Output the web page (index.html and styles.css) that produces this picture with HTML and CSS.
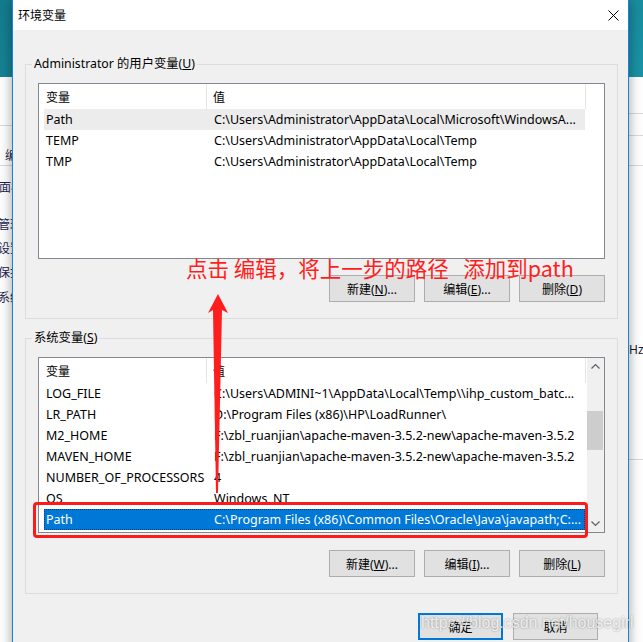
FILE: index.html
```html
<!DOCTYPE html>
<html lang="zh-CN">
<head>
<meta charset="utf-8">
<title>环境变量</title>
<link rel="stylesheet" href="styles.css">
</head>
<body>
<div class="desktop">
  <div class="bgwin bg-left">
    <div class="bg-line l1"></div>
    <div class="bg-line l2"></div>
    <div class="bg-links">
      <span class="frag f1">编辑</span>
      <span class="frag f2">面板</span>
      <span class="frag f3">管理</span>
      <span class="frag f4">设置</span>
      <span class="frag f5">保护</span>
      <span class="frag f6">系统</span>
    </div>
  </div>
  <div class="bgwin bg-right">
    <div class="bg-line r1"></div>
    <div class="bg-line r2"></div>
    <div class="bg-line r3"></div>
    <span class="hz">Hz</span>
    <div class="bg-line r4"></div>
  </div>

  <div class="dialog">
    <div class="titlebar">
      <span class="title">环境变量</span>
      <svg class="close" width="11" height="11" viewBox="0 0 11 11"><path d="M0.5 0.5 L10.5 10.5 M10.5 0.5 L0.5 10.5" stroke="#000" stroke-width="1" fill="none"/></svg>
    </div>
    <div class="body">
      <fieldset class="group">
        <legend>Administrator 的用户变量(<u>U</u>)</legend>
        <div class="list">
          <div class="lhead"><div class="hc1">变量</div><div class="hc2">值</div></div>
          <div class="row inactive"><div class="c1">Path</div><div class="c2">C:\Users\Administrator\AppData\Local\Microsoft\WindowsA...</div></div>
          <div class="row"><div class="c1">TEMP</div><div class="c2">C:\Users\Administrator\AppData\Local\Temp</div></div>
          <div class="row"><div class="c1">TMP</div><div class="c2">C:\Users\Administrator\AppData\Local\Temp</div></div>
        </div>
        <div class="btns">
          <button class="btn">新建(<u>N</u>)...</button>
          <button class="btn">编辑(<u>E</u>)...</button>
          <button class="btn">删除(<u>D</u>)</button>
        </div>
      </fieldset>

      <fieldset class="group g2">
        <legend>系统变量(<u>S</u>)</legend>
        <div class="list scroll">
          <div class="lmain">
            <div class="lhead"><div class="hc1">变量</div><div class="hc2">值</div></div>
            <div class="row"><div class="c1">LOG_FILE</div><div class="c2">C:\Users\ADMINI~1\AppData\Local\Temp\\ihp_custom_batc...</div></div>
            <div class="row"><div class="c1">LR_PATH</div><div class="c2">D:\Program Files (x86)\HP\LoadRunner\</div></div>
            <div class="row"><div class="c1">M2_HOME</div><div class="c2">F:\zbl_ruanjian\apache-maven-3.5.2-new\apache-maven-3.5.2</div></div>
            <div class="row"><div class="c1">MAVEN_HOME</div><div class="c2">F:\zbl_ruanjian\apache-maven-3.5.2-new\apache-maven-3.5.2</div></div>
            <div class="row"><div class="c1">NUMBER_OF_PROCESSORS</div><div class="c2">4</div></div>
            <div class="row"><div class="c1">OS</div><div class="c2">Windows_NT</div></div>
            <div class="row selected"><div class="c1">Path</div><div class="c2">C:\Program Files (x86)\Common Files\Oracle\Java\javapath;C:...</div></div>
          </div>
          <div class="vscroll">
            <svg class="arr" width="17" height="17" viewBox="0 0 17 17"><polyline points="4.5,10.5 8.5,6.5 12.5,10.5" fill="none" stroke="#606060" stroke-width="1.2"/></svg>
            <div class="track"><div class="thumb"></div></div>
            <svg class="arr" width="17" height="17" viewBox="0 0 17 17"><polyline points="4.5,6.5 8.5,10.5 12.5,6.5" fill="none" stroke="#606060" stroke-width="1.2"/></svg>
          </div>
        </div>
        <div class="btns">
          <button class="btn">新建(<u>W</u>)...</button>
          <button class="btn">编辑(<u>I</u>)...</button>
          <button class="btn">删除(<u>L</u>)</button>
        </div>
      </fieldset>

      <div class="footer">
        <button class="btn default">确定</button>
        <button class="btn">取消</button>
      </div>
    </div>
  </div>

  <div class="annot">点击 编辑，将上一步的路径   添加到path</div>
  <svg class="arrow" width="643" height="642" viewBox="0 0 643 642">
    <polygon points="218,294 228,313 222,310 218,493 216,493 213,310 208,313" fill="#ff1e1e"/>
  </svg>
  <div class="redbox"></div>
  <div class="watermark">https://blog.csdn.net/housegirl</div>
</div>
</body>
</html>
```

FILE: styles.css
```css
* { box-sizing: border-box; }
html, body { margin: 0; padding: 0; }
body {
  width: 643px;
  height: 642px;
  overflow: hidden;
  font-family: "Noto Sans", "Noto Sans CJK SC", sans-serif;
  font-size: 12px;
  color: #000;
}
.desktop {
  position: relative;
  width: 643px;
  height: 642px;
  overflow: hidden;
  background: linear-gradient(160deg, #137d8e 0%, #1d9cb0 50%, #0e6f80 100%);
}

/* background windows */
.bgwin { position: absolute; background: #fff; }
.bg-left { left: 0; top: 77px; width: 30px; bottom: 0; }
.bg-right { left: 600px; top: 77px; right: 0; bottom: 0; }
.bg-line { position: absolute; left: 0; right: 0; height: 1px; background: #dadada; }
.l1 { top: 48px; }
.l2 { top: 88px; }
.r1 { top: 36px; }
.r2 { top: 58px; }
.r3 { top: 88px; }
.r4 { top: 382px; }
.bg-links { position: absolute; left: 0; top: 0; width: 30px; }
.frag {
  position: absolute;
  font-family: "Noto Sans CJK SC", sans-serif;
  font-size: 12px;
  line-height: 14px;
  color: #1c2550;
  white-space: nowrap;
}
.f1 { left: 5px; top: 71px; }
.f2 { left: -1px; top: 103px; }
.f3 { left: -2px; top: 140px; }
.f4 { left: -2px; top: 164px; }
.f5 { left: -2px; top: 188px; }
.f6 { left: -2px; top: 213px; }
.hz { position: absolute; left: 29px; top: 266px; font-size: 12px; line-height: 14px; color: #1a1a1a; }

/* dialog */
.dialog {
  position: absolute;
  left: 12px;
  top: 0;
  width: 617px;
  height: 660px;
  border: 1px solid #1883d7;
  border-top: none;
  background: #f0f0f0;
  box-shadow: 0 0 12px rgba(0, 0, 0, 0.38);
  display: flex;
  flex-direction: column;
}
.titlebar {
  height: 30px;
  flex: none;
  background: #fff;
  display: flex;
  align-items: center;
  justify-content: space-between;
  padding: 0 9px 0 5px;
}
.title {
  font-family: "Noto Sans CJK SC", sans-serif;
  font-size: 12px;
  line-height: 16px;
}
.close { display: block; }

.body {
  padding: 26px 10px 0 12px;
  display: flex;
  flex-direction: column;
}
.group {
  margin: 0;
  border: 1px solid #dcdcdc;
  padding: 11px 12px 16px 12px;
  min-width: 0;
}
.group.g2 { margin-top: 11px; }
.group legend {
  margin-left: -6px;
  padding: 0 2px;
  line-height: 16px;
  font-size: 12.3px;
}

.list {
  height: 176px;
  background: #fff;
  border: 1px solid #828790;
  overflow: hidden;
}
.list.scroll { display: flex; }
.lmain { flex: 1; min-width: 0; }
.lhead {
  display: flex;
  height: 25px;
  width: 547px;
}
.hc1, .hc2 {
  display: flex;
  align-items: center;
  border-right: 1px solid #e5e5e5;
}
.hc1 { width: 168px; padding-left: 7px; }
.hc2 { flex: 1; padding-left: 6px; }
.row {
  display: flex;
  height: 21px;
  width: 541px;
  margin-left: 5px;
  align-items: center;
  white-space: nowrap;
  font-size: 12.5px;
}
.row .c1 { width: 170px; padding-left: 2px; }
.row .c2 { flex: 1; overflow: hidden; }
.row.inactive { background: #ececec; }
.row.selected {
  background: #0078d7;
  color: #fff;
  outline: 1px dotted rgba(0, 0, 0, 0.45);
  outline-offset: -1px;
}

.vscroll {
  width: 17px;
  flex: none;
  background: #f0f0f0;
  display: flex;
  flex-direction: column;
}
.arr { display: block; flex: none; }
.track { flex: 1; position: relative; }
.thumb {
  margin: 36px 1px 0 0;
  height: 39px;
  background: #cdcdcd;
}

.btns {
  display: flex;
  justify-content: flex-end;
  gap: 9px;
  margin-top: 16px;
}
.g2 .btns { margin-top: 17px; }
.btn {
  width: 86px;
  height: 27px;
  border: 1px solid #adadad;
  background: #e1e1e1;
  font-family: "Noto Sans", "Noto Sans CJK SC", sans-serif;
  font-size: 12px;
  color: #000;
  padding: 0;
  margin: 0;
}
.footer {
  display: flex;
  justify-content: flex-end;
  gap: 10px;
  margin-top: 19px;
  padding-right: 20px;
}
.footer .btn { width: 85px; }
.btn.default { border: 2px solid #0078d7; }

/* overlays */
.annot {
  position: absolute;
  left: 186px;
  top: 255px;
  font-family: "Noto Sans CJK SC", sans-serif;
  font-size: 21.5px;
  line-height: 26px;
  color: #ff1e1e;
  white-space: pre;
}
.arrow { position: absolute; left: 0; top: 0; pointer-events: none; }
.redbox {
  position: absolute;
  left: 33px;
  top: 502px;
  width: 555px;
  height: 36px;
  border: 3px solid #ff1a1a;
  border-radius: 4px;
}
.watermark {
  position: absolute;
  left: 421px;
  top: 613px;
  font-family: "Liberation Sans", sans-serif;
  font-size: 16px;
  line-height: 20px;
  color: rgba(255, 255, 255, 0.8);
  text-shadow: 0 0 2px rgba(0, 0, 0, 0.4);
  white-space: nowrap;
}
```
